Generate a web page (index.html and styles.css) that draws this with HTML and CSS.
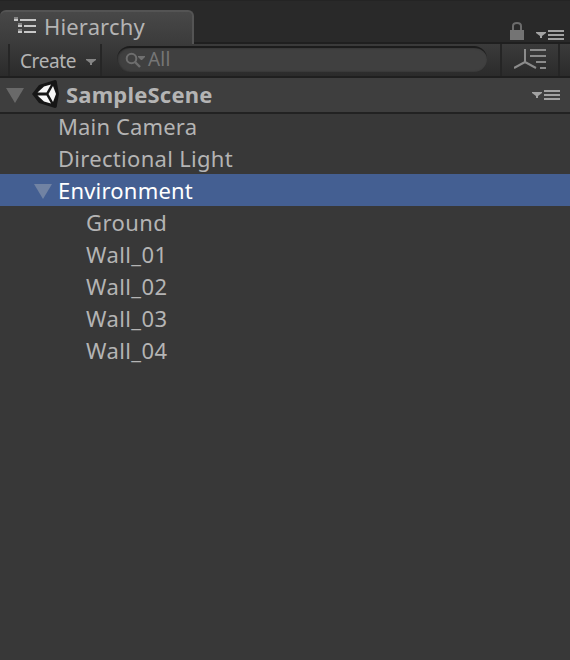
FILE: index.html
```
<!DOCTYPE html>
<html lang="en">
<head>
<meta charset="utf-8">
<title>Hierarchy</title>
<link rel="stylesheet" href="styles.css">
</head>
<body>
<div class="panel">
  <header class="tabbar">
    <div class="tab">
      <svg class="tab-icon" width="22" height="16" viewBox="0 0 22 16" shape-rendering="crispEdges">
        <path fill="#858585" d="M0 0h4v2H0zM4 6h4v2H4zM4 12h4v2H4z"/>
        <path fill="#c8c8c8" d="M0 2h4v2H0zM6 2h16v2H6zM4 8h4v2H4zM10 8h12v2H10zM4 14h4v2H4zM10 14h12v2H10z"/>
      </svg>
      <span class="tab-title">Hierarchy</span>
    </div>
    <div class="tab-tools">
      <svg class="lock" width="14" height="18" viewBox="0 0 14 18">
        <path fill="none" stroke="#6c6c6c" stroke-width="2" d="M3 8V4Q3 1 7 1T11 4V8"/>
        <path fill="#747474" d="M0 8h14v10H0z"/>
      </svg>
      <svg width="28" height="10" viewBox="0 0 28 10">
        <path fill="#a2a2a2" d="M0 2h10v1L6 6v2H4V6L0 3zM12 0h16v2H12zM12 4h16v2H12zM12 8h16v2H12z"/>
      </svg>
    </div>
  </header>
  <div class="toolbar">
    <div class="create">
      <span class="create-label">Create</span>
      <svg class="create-arrow" width="10" height="6" viewBox="0 0 10 6"><path fill="#858585" d="M0 0h10v1L6 4v2H4V4L0 1z"/></svg>
    </div>
    <div class="search">
      <svg width="22" height="17" viewBox="0 0 22 17">
        <circle cx="6.500" cy="6.500" r="4.800" fill="none" stroke="#6e6e6e" stroke-width="2"/>
        <path stroke="#6e6e6e" stroke-width="2.400" d="M10 10l5 5"/>
        <path fill="#707070" d="M13 4h7v1l-3 3h-1l-3-3z"/>
      </svg>
      <span class="search-text">All</span>
    </div>
    <div class="sort">
      <svg width="32" height="21" viewBox="0 0 32 21">
        <path fill="none" stroke="#8b8b8b" stroke-width="2" d="M11 0v13M11 13L0 19M11 13l11 6"/>
        <path fill="#8b8b8b" d="M16 0h16v2H16zM16 6h16v2H16zM22 12h10v2H22zM26 18h6v2h-6z"/>
      </svg>
    </div>
  </div>
  <div class="scene">
    <svg class="fold" width="18" height="15" viewBox="0 0 18 15"><path fill="#696969" d="M0 0h18L9 15z"/></svg>
    <svg class="logo" width="28" height="30" viewBox="0 0 28 30">
      <path fill="#161616" d="M0 15L7 6 23 1q2 0 2 3l2 11-2 11q0 3-2 3L7 24z"/>
      <path fill="#f7f7f7" d="M5.500 13.500L12 7.500l7-2-4.500 8zM21 7l3 8-3 8-4.500-8zM5.500 16.500h9l4.500 8-7-2z"/>
    </svg>
    <span class="scene-name">SampleScene</span>
    <svg class="scene-menu" width="28" height="10" viewBox="0 0 28 10">
      <path fill="#a2a2a2" d="M0 2h10v1L6 6v2H4V6L0 3zM12 0h16v2H12zM12 4h16v2H12zM12 8h16v2H12z"/>
    </svg>
  </div>
  <ul class="tree">
    <li class="row camera">Main Camera</li>
    <li class="row light">Directional Light</li>
    <li class="row selected"><svg class="fold" width="18" height="15" viewBox="0 0 18 15"><path fill="#7183a3" d="M0 0h18L9 15z"/></svg>Environment</li>
    <li class="row child">Ground</li>
    <li class="row child">Wall_01</li>
    <li class="row child">Wall_02</li>
    <li class="row child">Wall_03</li>
    <li class="row child">Wall_04</li>
  </ul>
</div>
</body>
</html>
```

FILE: styles.css
```
* { box-sizing: border-box; }
body {
  margin: 0;
  background: #383838;
  color: #b4b4b4;
  font-family: "Noto Sans", "Open Sans", sans-serif;
  font-size: 22px;
}
svg { display: block; flex: none; }
.panel { display: flex; flex-direction: column; height: 660px; overflow: hidden; }
.tabbar {
  display: flex;
  align-items: flex-end;
  justify-content: space-between;
  height: 44px;
  background: linear-gradient(#242424 0 1px, #292929 1px 42px, #1f1f1f 42px);
}
.tab {
  display: flex;
  align-items: flex-start;
  width: 194px;
  height: 34px;
  padding: 5px 0 0 14px;
  border: solid #545454;
  border-width: 2px 2px 0 0;
  border-radius: 6px 6px 0 0;
  background: linear-gradient(#484848, #3b3b3b);
}
.tab-icon { margin-right: 8px; }
.tab-title { line-height: 30px; margin-top: -6px; letter-spacing: .15px; }
.tab-tools { display: flex; align-items: flex-end; gap: 12px; padding: 0 6px 4px 0; }
.toolbar {
  display: flex;
  height: 34px;
  padding-left: 8px;
  background: linear-gradient(#3b3b3b, #2b2b2b 32px, #1f1f1f 32px);
}
.create {
  display: flex;
  align-items: center;
  width: 94px;
  height: 32px;
  padding-left: 10px;
  border: solid #262626;
  border-width: 0 2px;
}
.create-label { width: 56px; font-size: 19px; letter-spacing: -.4px; line-height: 32px; margin-top: 1px; }
.create-arrow { margin: 4px 0 0 10px; }
.search {
  display: flex;
  align-items: center;
  width: 370px;
  height: 26px;
  margin: 2px 0 0 15px;
  padding-left: 8px;
  border-top: 2px solid #1c1c1c;
  border-radius: 13px;
  background: #404040;
  box-shadow: inset 1px 0 2px #292929;
}
.search-text { color: #767676; font-size: 19px; line-height: 24px; letter-spacing: .2px; margin: -3px 0 0 1px; }
.sort {
  width: 60px;
  height: 32px;
  margin-left: 13px;
  padding: 5px 0 0 12px;
  border: solid #252525;
  border-width: 0 2px;
}
.scene {
  display: flex;
  align-items: center;
  height: 36px;
  padding: 0 10px 0 6px;
  border-bottom: 2px solid #222;
  background: #3e3e3e;
}
.logo { margin: -3px 6px 0 8px; }
.scene-name { font-weight: 700; line-height: 34px; letter-spacing: .2px; margin-top: -2px; }
.scene-menu { margin-left: auto; }
.tree { list-style: none; margin: -4px 0 0; padding: 0; }
.row {
  display: flex;
  align-items: center;
  height: 32px;
  padding-left: 58px;
  line-height: 32px;
}
.camera { letter-spacing: .15px; }
.light { letter-spacing: .3px; }
.selected { padding-left: 34px; background: #445f92; color: #fff; letter-spacing: .2px; }
.selected .fold { margin: 2px 6px 0 0; }
.child { padding-left: 86px; letter-spacing: .4px; }
```
